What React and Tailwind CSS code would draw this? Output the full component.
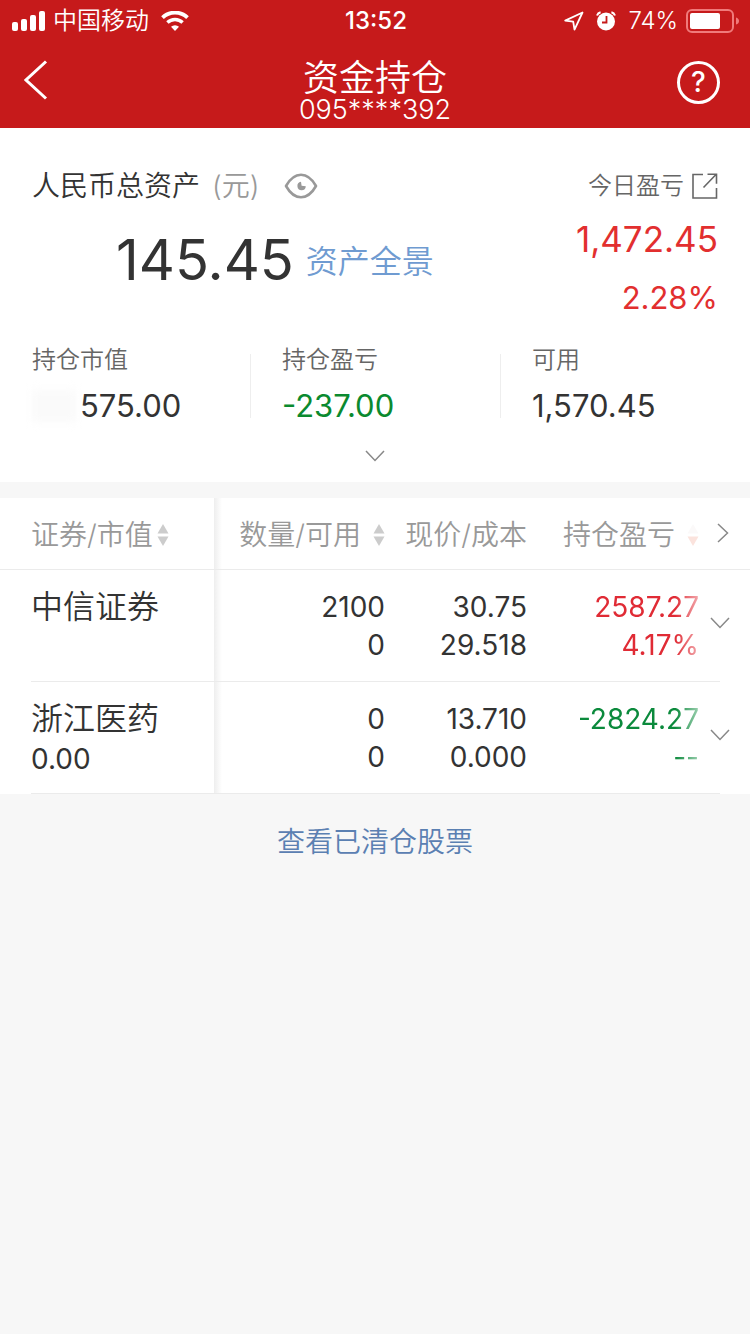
import React, { useState } from 'react';

const summary = [
  { label: '持仓市值', value: '575.00', color: 'text-[#333333]', masked: true },
  { label: '持仓盈亏', value: '-237.00', color: 'text-[#0b8a2f]' },
  { label: '可用', value: '1,570.45', color: 'text-[#333333]' },
];

const holdings = [
  {
    name: '中信证券',
    marketValue: '',
    quantity: '2100',
    available: '0',
    price: '30.75',
    cost: '29.518',
    profit: '2587.27',
    rate: '4.17%',
    color: 'text-[#e02b35]',
  },
  {
    name: '浙江医药',
    marketValue: '0.00',
    quantity: '0',
    available: '0',
    price: '13.710',
    cost: '0.000',
    profit: '-2824.27',
    rate: '--',
    color: 'text-[#0b8a3c]',
  },
];

const SignalIcon = () => (
  <svg width="33" height="20" viewBox="0 0 33 20" fill="#fff" aria-hidden="true">
    <rect x="0" y="11" width="6" height="9" rx="2" />
    <rect x="9" y="8" width="6" height="12" rx="2" />
    <rect x="18" y="4" width="6" height="16" rx="2" />
    <rect x="27" y="0" width="6" height="20" rx="2" />
  </svg>
);

const WifiIcon = () => (
  <svg width="28" height="20" viewBox="0 0 28 20" aria-hidden="true">
    <path d="M1.5 6.6a18 18 0 0 1 25 0" fill="none" stroke="#fff" strokeWidth="3.8" />
    <path d="M6.4 11.6a11 11 0 0 1 15.2 0" fill="none" stroke="#fff" strokeWidth="3.4" />
    <path d="M14 20l-4-4.2a6 6 0 0 1 8 0z" fill="#fff" />
  </svg>
);

const LocationIcon = () => (
  <svg width="20" height="20" viewBox="0 0 20 20" fill="none" stroke="#fff" strokeWidth="1.8" strokeLinejoin="round" aria-hidden="true">
    <path d="M18.500 1.500L1.200 9.600l8 1.100 1.300 7.900z" />
  </svg>
);

const AlarmIcon = () => (
  <svg width="20" height="20" viewBox="0 0 20 20" aria-hidden="true">
    <circle cx="10" cy="10.5" r="9" fill="#fff" />
    <path d="M1 4.5a5 5 0 0 1 3.6-3.2M19 4.5a5 5 0 0 0-3.6-3.2" fill="none" stroke="#fff" strokeWidth="2" />
    <path d="M10.5 5v6.5H6" fill="none" stroke="#c61a1b" strokeWidth="1.8" />
  </svg>
);

const BatteryIcon = () => (
  <svg width="54" height="24" viewBox="0 0 54 24" aria-hidden="true">
    <rect x="1" y="1" width="46" height="22" rx="5" fill="none" stroke="#f07b7b" strokeWidth="2" />
    <rect x="4" y="4" width="30" height="16" rx="2" fill="#fff" />
    <path d="M50 8.5q3 1 3 3.5t-3 3.5z" fill="#f07b7b" />
  </svg>
);

const EyeIcon = () => (
  <svg width="34" height="28" viewBox="0 0 34 28" fill="none" aria-hidden="true">
    <path d="M2 14C6.5 6 11.5 2.8 17 2.8S27.5 6 32 14C27.5 22 22.5 25.2 17 25.2S6.500 22 2 14z" stroke="#999" strokeWidth="2.6" strokeLinejoin="round" />
    <path d="M17 9.800l.6 4 4.200.4a4.200 4.200 0 1 1-4.800-4.400z" fill="#999" />
  </svg>
);

const ShareIcon = () => (
  <svg width="26" height="26" viewBox="0 0 26 26" fill="none" stroke="#666" strokeWidth="1.6" aria-hidden="true">
    <path d="M11 1.5H1V25h23.500V15" />
    <path d="M11.500 14.500L24 1.500M15.500 1.200h9v9.500" />
  </svg>
);

const ChevronDown = () => (
  <svg width="20" height="12" viewBox="0 0 20 12" fill="none" stroke="#888" strokeWidth="1.5" aria-hidden="true">
    <path d="M1 1l9 9.500L19 1" />
  </svg>
);

const SortIcon = () => (
  <svg width="12" height="24" viewBox="0 0 12 24" fill="#cccccc" aria-hidden="true">
    <path d="M6 1l5.500 9.500H.5z" />
    <path d="M6 23L.5 13.500h11z" />
  </svg>
);

const StatusBar = () => (
  <div className="grid h-10 grid-cols-3 items-center pt-[2px] pr-[10px] pl-3 text-2xl">
    <div className="flex items-center gap-2">
      <SignalIcon />
      <span>中国移动</span>
      <span className="ml-1">
        <WifiIcon />
      </span>
    </div>
    <div className="text-center font-medium">13:52</div>
    <div className="flex items-center justify-end gap-2">
      <LocationIcon />
      <span className="ml-1">
        <AlarmIcon />
      </span>
      <span className="ml-1">74%</span>
      <BatteryIcon />
    </div>
  </div>
);

const NavBar = () => (
  <div className="flex h-[88px] items-center justify-between pr-[30px] pb-1 pl-6">
    <button type="button" aria-label="返回" className="w-[49px] pb-1">
      <svg width="24" height="40" viewBox="0 0 24 40" fill="none" stroke="#fff" strokeWidth="3" aria-hidden="true">
        <path d="M22 1.500L2 20l20 18.500" />
      </svg>
    </button>
    <div className="pt-5 text-center">
      <h1 className="text-[36px] leading-9">资金持仓</h1>
      <p className="text-[27px] leading-7">095****392</p>
    </div>
    <button
      type="button"
      aria-label="帮助"
      className="flex h-[43px] w-[43px] items-center justify-center rounded-full border-3 border-white text-[28px] leading-none font-medium"
    >
      ?
    </button>
  </div>
);

const Assets = ({ hidden, onToggle }) => (
  <section className="bg-white pt-10 pb-5">
    <div className="flex justify-between px-8">
      <div>
        <div className="flex h-9 items-center text-[28px]">
          <h2 className="text-[#333333]">人民币总资产</h2>
          <span className="ml-3 text-[#999999]">(元)</span>
          <button type="button" aria-label="显示或隐藏金额" aria-pressed={hidden} onClick={onToggle} className="ml-6">
            <EyeIcon />
          </button>
        </div>
        <div className="mt-5 flex items-center pl-[84px]">
          <span className="text-[56px] leading-[72px] font-normal text-[#333333]">{hidden ? '****' : '145.45'}</span>
          <a href="#overview" className="ml-3 pt-1 text-[32px] leading-10 text-[#6f9bd1]">
            资产全景
          </a>
        </div>
      </div>
      <div className="flex flex-col items-end text-[#e22f2f]">
        <a href="#today" className="flex h-9 items-center gap-2 text-2xl text-[#666666]">
          今日盈亏
          <ShareIcon />
        </a>
        <div className="mt-3 text-[35px] leading-[46px] font-normal">1,472.45</div>
        <div className="mt-4 text-[31px] leading-10 font-normal">2.28%</div>
      </div>
    </div>

    <dl className="mt-6 grid grid-cols-3">
      {summary.map((item, index) => (
        <div key={item.label} className="relative h-[88px] pl-8">
          {index > 0 && <span className="absolute top-3 left-0 h-16 w-px bg-[#eeeeee]" />}
          <dt className="text-2xl leading-9 text-[#666666]">{item.label}</dt>
          <dd className={`mt-1 flex items-center text-[31px] leading-[48px] font-normal ${item.color}`}>
            {item.masked && <span className="mr-1 h-8 w-11 bg-[#fafafa] blur-xs" />}
            {hidden ? '****' : item.value}
          </dd>
        </div>
      ))}
    </dl>

    <div className="mt-4 flex justify-center">
      <button type="button" aria-label="展开" className="px-4 pt-1">
        <ChevronDown />
      </button>
    </div>
  </section>
);

const HoldingsTable = () => (
  <table className="mt-4 w-full table-fixed bg-white text-right text-[28px] text-[#333333]">
    <thead>
      <tr className="h-[71px] border-b border-[#ebebeb] text-[#999999]">
        <th className="w-[214px] pt-1 pl-[31px] text-left font-[350]">
          <button type="button" className="flex items-center gap-1">
            证券/市值
            <SortIcon />
          </button>
        </th>
        <th className="w-[171px] bg-[linear-gradient(to_right,#eeeeee,#ffffff_8px)] pt-1 font-[350]">
          <button type="button" className="ml-auto flex items-center gap-3">
            数量/可用
            <SortIcon />
          </button>
        </th>
        <th className="w-[142px] pt-1 font-[350]">现价/成本</th>
        <th className="w-[172px] pt-1 font-[350]">
          <button type="button" className="ml-auto flex items-center gap-3">
            持仓盈亏
            <svg width="12" height="24" viewBox="0 0 12 24" aria-hidden="true">
              <path d="M6 1l5.500 9.500H.5z" fill="#fbf9f9" />
              <path d="M6 23L.5 13.500h11z" fill="#fbe3dd" />
            </svg>
          </button>
        </th>
        <th className="w-[51px]">
          <button type="button" aria-label="更多列" className="flex pl-[18px]">
            <svg width="12" height="20" viewBox="0 0 12 20" fill="none" stroke="#888" strokeWidth="1.5" aria-hidden="true">
              <path d="M1 1l9.500 9L1 19" />
            </svg>
          </button>
        </th>
      </tr>
    </thead>
    <tbody className="leading-[38px] font-normal">
      {holdings.map((row) => (
        <tr key={row.name}>
          <td className="pl-[31px] text-left">
            <div className="h-28 border-b border-[#ebebeb] pt-4">
              <div className="text-[32px] leading-[42px] font-[350]">{row.name}</div>
              <div>{row.marketValue}</div>
            </div>
          </td>
          <td className="bg-[linear-gradient(to_right,#eeeeee,#ffffff_8px)]">
            <div className="h-28 border-b border-[#ebebeb] pt-[18px]">
              <div>{row.quantity}</div>
              <div>{row.available}</div>
            </div>
          </td>
          <td>
            <div className="h-28 border-b border-[#ebebeb] pt-[18px]">
              <div>{row.price}</div>
              <div>{row.cost}</div>
            </div>
          </td>
          <td className={row.color}>
            <div className="h-28 border-b border-[#ebebeb] pt-[18px]">
              <div className="[mask-image:linear-gradient(to_left,rgba(0,0,0,0.4),#000000_24px)]">
                <div>{row.profit}</div>
                <div>{row.rate}</div>
              </div>
            </div>
          </td>
          <td className="pr-[30px]">
            <div className="flex h-28 items-center border-b border-[#ebebeb] pb-1">
              <button type="button" aria-label={`展开${row.name}`} className="ml-[11px] shrink-0">
                <ChevronDown />
              </button>
            </div>
          </td>
        </tr>
      ))}
    </tbody>
  </table>
);

const App = () => {
  const [hidden, setHidden] = useState(false);

  return (
    <div className="min-h-screen bg-[#f7f7f7] font-['Inter','Noto_Sans_CJK_SC',sans-serif] font-[350]">
      <header className="bg-[#c61a1b] text-white">
        <StatusBar />
        <NavBar />
      </header>
      <main>
        <Assets hidden={hidden} onToggle={() => setHidden(!hidden)} />
        <HoldingsTable />
        <div className="mt-7 text-center">
          <a href="#closed" className="text-[28px] leading-10 text-[#5b80b2]">
            查看已清仓股票
          </a>
        </div>
      </main>
    </div>
  );
};

export default App;
